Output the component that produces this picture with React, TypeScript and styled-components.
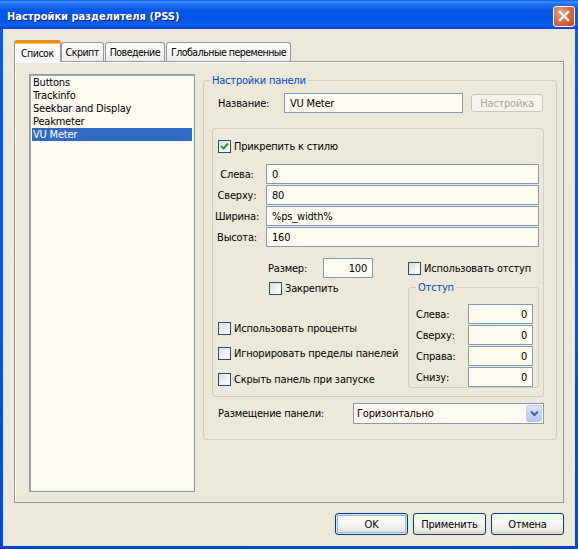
import React from 'react'
import styled, { createGlobalStyle, css } from 'styled-components'

const GlobalStyle = createGlobalStyle`
  html, body {
    margin: 0;
    padding: 0;
    background: #ffffff;
  }
  body {
    font-family: "DejaVu Sans Condensed", "Liberation Sans", sans-serif;
    font-size: 11px;
    letter-spacing: -0.2px;
    color: #000000;
  }
  * {
    box-sizing: border-box;
  }
`

// окно и рамка
const Window = styled.div`
  width: 578px;
  height: 549px;
  display: flex;
  flex-direction: column;
  background: linear-gradient(180deg, #0a58e8 0%, #0553e0 60%, #0846d6 100%);
`

const TitleBar = styled.div`
  height: 29px;
  flex: none;
  display: flex;
  align-items: center;
  justify-content: space-between;
  padding: 4px 3px 0 7px;
  background: linear-gradient(
    180deg,
    #0b5ae6 0%,
    #3f8ffc 7%,
    #1f6ff3 14%,
    #0758e6 35%,
    #0255e4 60%,
    #0660f0 86%,
    #0551dc 93%,
    #0a3ec8 100%
  );
`

const Title = styled.h1`
  margin: 0;
  font-family: "DejaVu Sans Condensed", "Liberation Sans", sans-serif;
  font-weight: bold;
  font-size: 11px;
  letter-spacing: 0;
  color: #ffffff;
  text-shadow: 1px 1px 0 #0f1d8a;
`

const CloseButton = styled.div`
  width: 22px;
  height: 21px;
  margin-top: -1px;
  border: 1px solid #ffffff;
  border-radius: 3px;
  display: flex;
  align-items: center;
  justify-content: center;
  background: radial-gradient(circle at 35% 30%, #f0a088 0%, #e06a48 45%, #c9441c 100%);
`

const Body = styled.div`
  flex: 1;
  margin: 0 3px 3px 3px;
  background: #ece9d8;
  display: flex;
  flex-direction: column;
  padding: 11px 11px 11px 11px;
`

// вкладки
const TabRow = styled.div`
  height: 22px;
  margin-bottom: -1px;
  display: flex;
  align-items: flex-start;
  position: relative;
  z-index: 1;
`

const Tab = styled.div<{ $active?: boolean }>`
  height: 19px;
  margin-top: 2px;
  padding: 0 4px;
  display: flex;
  align-items: center;
  font-size: 10.5px;
  letter-spacing: -0.5px;
  border: 1px solid #919b9c;
  border-bottom: none;
  border-radius: 3px 3px 0 0;
  background: linear-gradient(180deg, #ffffff 0%, #f7f7f4 50%, #ecebe5 100%);
  margin-right: 1px;
  white-space: nowrap;

  ${(p) =>
    p.$active &&
    css`
      height: 22px;
      margin-top: 0;
      margin-right: 0;
      padding: 0 6px;
      border-top: 3px solid #e68b2c;
      box-shadow: inset 0 1px 0 #ffc83c;
      background: #fcfcfe;
    `}
`

const Panel = styled.div`
  height: 442px;
  border: 1px solid #919b9c;
  box-shadow: inset 1px 1px 0 #ffffff;
  background: #ece9d8;
  display: grid;
  grid-template-columns: 166px 1fr;
  column-gap: 8px;
  padding: 12px 6px 10px 14px;
`

// список
const ListBox = styled.div`
  border: 1px solid #7f9db9;
  background: #fffbf0;
  box-shadow: inset 1px 1px 0 #aca899, inset -1px -1px 0 #f1efe2;
  padding: 1px 2px;
`

const ListItem = styled.div<{ $selected?: boolean }>`
  height: 13px;
  line-height: 13px;
  padding-left: 1px;
  white-space: nowrap;
  ${(p) =>
    p.$selected &&
    css`
      background: #316ac5;
      color: #ffffff;
    `}
`

// группы
const Group = styled.fieldset<{ $top?: number }>`
  margin: ${(p) => p.$top ?? 0}px 0 0 0;
  min-width: 0;
  border: 1px solid #d0d0bf;
  border-radius: 3px;
  padding: 0;
`

const Legend = styled.legend<{ $offset: number }>`
  margin-left: ${(p) => p.$offset}px;
  padding: 0 2px;
  line-height: 13px;
  color: #0046d5;
`

const GroupBody = styled.div<{ $pad: string }>`
  padding: ${(p) => p.$pad};
`

const Frame = styled.div`
  border: 1px solid #d0d0bf;
  border-radius: 3px;
  height: 269px;
  margin-top: 15px;
  padding: 11px 4px 0 0;
  display: flex;
  flex-direction: column;
`

const Row = styled.div<{ $left?: number; $top?: number }>`
  display: flex;
  align-items: center;
  padding-left: ${(p) => p.$left ?? 0}px;
  margin-top: ${(p) => p.$top ?? 0}px;
`

const Label = styled.span<{ $width?: number }>`
  width: ${(p) => (p.$width ? `${p.$width}px` : 'auto')};
  flex: none;
  white-space: nowrap;
`

const Edit = styled.div<{ $width?: number; $right?: boolean }>`
  height: 20px;
  width: ${(p) => (p.$width ? `${p.$width}px` : 'auto')};
  flex: ${(p) => (p.$width ? 'none' : '1')};
  border: 1px solid #7f9db9;
  background: #fffbf0;
  display: flex;
  align-items: center;
  justify-content: ${(p) => (p.$right ? 'flex-end' : 'flex-start')};
  padding: 0 5px;
  white-space: nowrap;
`

const FieldGrid = styled.div<{ $label: number; $gap: number; $top?: number }>`
  display: grid;
  grid-template-columns: ${(p) => p.$label}px 1fr;
  column-gap: ${(p) => p.$gap}px;
  row-gap: 1px;
  align-items: center;
  margin-top: ${(p) => p.$top ?? 0}px;
`

const GridLabel = styled.span<{ $center?: boolean }>`
  text-align: ${(p) => (p.$center ? 'center' : 'left')};
  white-space: nowrap;
`

const Lower = styled.div`
  display: grid;
  grid-template-columns: 195px 131px;
  margin-top: 11px;
`

const LeftCol = styled.div`
  display: flex;
  flex-direction: column;
`

const RightCol = styled.div`
  display: flex;
  flex-direction: column;
  padding-top: 4px;
`

// флажки
const CheckWrap = styled.label<{ $left?: number; $top?: number }>`
  display: flex;
  align-items: center;
  height: 13px;
  gap: 3px;
  padding-left: ${(p) => p.$left ?? 0}px;
  margin-top: ${(p) => p.$top ?? 0}px;
  white-space: nowrap;
`

const Box = styled.span`
  width: 13px;
  height: 13px;
  flex: none;
  border: 1px solid #1c5180;
  background: linear-gradient(135deg, #dcdcd7 0%, #f4f4f0 60%, #ffffff 100%);
  display: flex;
  align-items: center;
  justify-content: center;
`

// кнопки
const Button = styled.div<{ $width: number; $height: number; $default?: boolean; $disabled?: boolean }>`
  width: ${(p) => p.$width}px;
  height: ${(p) => p.$height}px;
  flex: none;
  border: 1px solid #003c74;
  border-radius: 3px;
  display: flex;
  align-items: center;
  justify-content: center;
  background: linear-gradient(180deg, #ffffff 0%, #f6f6f2 45%, #ecebe4 80%, #d8d3c8 100%);
  white-space: nowrap;
  ${(p) =>
    p.$default &&
    css`
      box-shadow: inset 0 0 0 1px #cee7ff, inset 0 0 0 2px #98b8ea;
    `}
  ${(p) =>
    p.$disabled &&
    css`
      margin-left: 8px;
      border-color: #c9c7ba;
      background: #f5f4ea;
      color: #aca899;
    `}
`

const Footer = styled.div`
  display: flex;
  justify-content: flex-end;
  gap: 5px;
  margin-top: 10px;
`

const Select = styled.div`
  width: 191px;
  height: 21px;
  flex: none;
  border: 1px solid #7f9db9;
  background: #fffbf0;
  display: flex;
  align-items: center;
  justify-content: space-between;
  padding: 1px 1px 1px 3px;
`

const DropButton = styled.div`
  width: 16px;
  height: 17px;
  border: 1px solid #b9cdf6;
  border-radius: 2px;
  background: linear-gradient(180deg, #dce6fd 0%, #c3d4fb 50%, #b2c7f5 100%);
  display: flex;
  align-items: center;
  justify-content: center;
`

const Check = ({ label, checked, left, top }: { label: string; checked?: boolean; left?: number; top?: number }) => (
  <CheckWrap $left={left} $top={top}>
    <Box>
      {checked && (
        <svg width="9" height="9" viewBox="0 0 9 9">
          <path d="M1 4 L3.5 6.5 L8 1.5" stroke="#21a121" strokeWidth="2" fill="none" />
        </svg>
      )}
    </Box>
    {label}
  </CheckWrap>
)

const items = ['Buttons', 'Trackinfo', 'Seekbar and Display', 'Peakmeter', 'VU Meter']

const position = [
  { label: 'Слева:', value: '0' },
  { label: 'Сверху:', value: '80' },
  { label: 'Ширина:', value: '%ps_width%' },
  { label: 'Высота:', value: '160' },
]

const margins = ['Слева:', 'Сверху:', 'Справа:', 'Снизу:']

const App: React.FC = () => {
  return (
    <>
      <GlobalStyle />
      <Window>
        <TitleBar>
          <Title>Настройки разделителя (PSS)</Title>
          <CloseButton>
            <svg width="12" height="12" viewBox="0 0 12 12">
              <path d="M2 2 L10 10 M10 2 L2 10" stroke="#ffffff" strokeWidth="2.4" strokeLinecap="square" />
            </svg>
          </CloseButton>
        </TitleBar>

        <Body>
          <TabRow>
            <Tab $active>Список</Tab>
            <Tab>Скрипт</Tab>
            <Tab>Поведение</Tab>
            <Tab>Глобальные переменные</Tab>
          </TabRow>

          <Panel>
            <ListBox>
              {items.map((a) => (
                <ListItem key={a} $selected={a === 'VU Meter'}>
                  {a}
                </ListItem>
              ))}
            </ListBox>

            <div>
              <Group>
                <Legend $offset={6}>Настройки панели</Legend>
                <GroupBody $pad="0 12px 15px 8px">
                  <Row $left={6} $top={6}>
                    <Label $width={66}>Название:</Label>
                    <Edit $width={179}>VU Meter</Edit>
                    <Button $width={72} $height={18} $disabled>
                      Настройка
                    </Button>
                  </Row>

                  <Frame>
                    <Check label="Прикрепить к стилю" checked left={5} />

                    <FieldGrid $label={48} $gap={5} $top={11}>
                      {position.map((a) => (
                        <React.Fragment key={a.label}>
                          <GridLabel $center>{a.label}</GridLabel>
                          <Edit>{a.value}</Edit>
                        </React.Fragment>
                      ))}
                    </FieldGrid>

                    <Lower>
                      <LeftCol>
                        <Row $left={55}>
                          <Label $width={55}>Размер:</Label>
                          <Edit $width={50} $right>
                            100
                          </Edit>
                        </Row>
                        <Check label="Закрепить" left={56} top={4} />
                        <Check label="Использовать проценты" left={5} top={27} />
                        <Check label="Игнорировать пределы панелей" left={5} top={12} />
                        <Check label="Скрыть панель при запуске" left={5} top={13} />
                      </LeftCol>

                      <RightCol>
                        <Check label="Использовать отступ" />
                        <Group $top={6}>
                          <Legend $offset={7}>Отступ</Legend>
                          <GroupBody $pad="10px 5px 0 7px">
                            <FieldGrid $label={52} $gap={0}>
                              {margins.map((a) => (
                                <React.Fragment key={a}>
                                  <GridLabel>{a}</GridLabel>
                                  <Edit $right>0</Edit>
                                </React.Fragment>
                              ))}
                            </FieldGrid>
                          </GroupBody>
                        </Group>
                      </RightCol>
                    </Lower>
                  </Frame>

                  <Row $left={6} $top={6}>
                    <Label $width={135}>Размещение панели:</Label>
                    <Select>
                      Горизонтально
                      <DropButton>
                        <svg width="9" height="7" viewBox="0 0 9 7">
                          <path d="M1 1.5 L4.5 5 L8 1.5" stroke="#4d6185" strokeWidth="2" fill="none" />
                        </svg>
                      </DropButton>
                    </Select>
                  </Row>
                </GroupBody>
              </Group>
            </div>
          </Panel>

          <Footer>
            <Button $width={73} $height={22} $default>
              OK
            </Button>
            <Button $width={73} $height={22}>
              Применить
            </Button>
            <Button $width={73} $height={22}>
              Отмена
            </Button>
          </Footer>
        </Body>
      </Window>
    </>
  )
}

export default App
